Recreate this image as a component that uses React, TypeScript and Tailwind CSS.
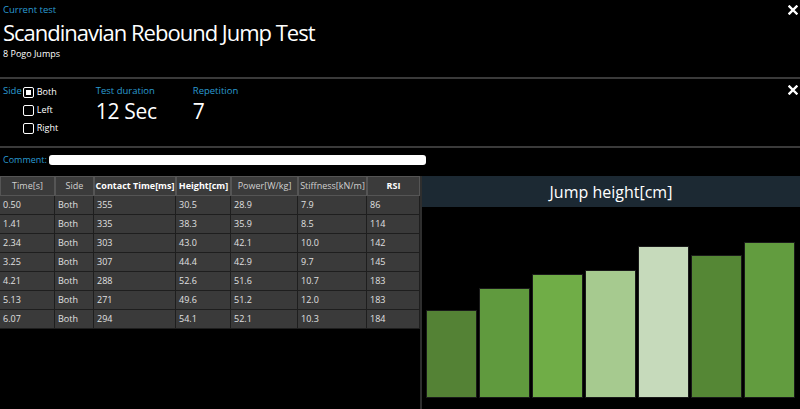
import { FC } from "react";

type Row = {
  time: string;
  side: string;
  contact: string;
  height: string;
  power: string;
  stiffness: string;
  rsi: string;
};

const rows: Row[] = [
  { time: "0.50", side: "Both", contact: "355", height: "30.5", power: "28.9", stiffness: "7.9", rsi: "86" },
  { time: "1.41", side: "Both", contact: "335", height: "38.3", power: "35.9", stiffness: "8.5", rsi: "114" },
  { time: "2.34", side: "Both", contact: "303", height: "43.0", power: "42.1", stiffness: "10.0", rsi: "142" },
  { time: "3.25", side: "Both", contact: "307", height: "44.4", power: "42.9", stiffness: "9.7", rsi: "145" },
  { time: "4.21", side: "Both", contact: "288", height: "52.6", power: "51.6", stiffness: "10.7", rsi: "183" },
  { time: "5.13", side: "Both", contact: "271", height: "49.6", power: "51.2", stiffness: "12.0", rsi: "183" },
  { time: "6.07", side: "Both", contact: "294", height: "54.1", power: "52.1", stiffness: "10.3", rsi: "184" },
];

const columns = [
  { label: "Time[s]", w: "w-[55px]", bold: false },
  { label: "Side", w: "w-[39px]", bold: false },
  { label: "Contact Time[ms]", w: "w-[82px]", bold: true },
  { label: "Height[cm]", w: "w-[55px]", bold: true },
  { label: "Power[W/kg]", w: "w-[67px]", bold: false },
  { label: "Stiffness[kN/m]", w: "w-[69px]", bold: false },
  { label: "RSI", w: "w-[53px]", bold: true },
];

const barColors = [
  "bg-[#548235]",
  "bg-[#609a3e]",
  "bg-[#70ad47]",
  "bg-[#a6ca8f]",
  "bg-[#c6dabb]",
  "bg-[#558735]",
  "bg-[#629c3f]",
];

const CloseX: FC = () => (
  <svg width="10" height="10" viewBox="0 0 10 10">
    <path d="M1.5 1.5 L8.5 8.5 M8.5 1.5 L1.5 8.5" stroke="white" strokeWidth="2.4" strokeLinecap="square" />
  </svg>
);

const Check: FC<{ label: string; checked?: boolean }> = ({ label, checked }) => (
  <div className="flex items-center h-[18px] gap-[3px]">
    <div className="w-[11px] h-[11px] border-[1.5px] border-white rounded-[2px] flex items-center justify-center">
      {checked && <div className="w-[5px] h-[5px] bg-white" />}
    </div>
    <span className="text-[9px] text-white">{label}</span>
  </div>
);

const App: FC = () => {
  const vals = rows.map((r) => ({ key: r.time, h: parseFloat(r.height) }));
  return (
    <div className="w-[800px] h-[409px] bg-black text-white overflow-hidden flex flex-col font-['Open_Sans',sans-serif]">
      {/* header */}
      <div className="relative h-[79px] shrink-0 px-[3px] pt-[4px] border-b-2 border-[#3a3a3a]">
        <div className="absolute right-[2px] top-[5px]">
          <CloseX />
        </div>
        <p className="text-[9.5px] leading-[12px] text-[#2b9bd1]">Current test</p>
        <h1 className="text-[22px] leading-[30px] tracking-[-1px] mt-[1px]">Scandinavian Rebound Jump Test</h1>
        <p className="text-[9px] leading-[13px]">8 Pogo Jumps</p>
      </div>

      {/* settings */}
      <div className="relative h-[69px] shrink-0 flex px-[3px] pt-[5px] border-b-2 border-[#3a3a3a]">
        <div className="absolute right-[2px] top-[6px]">
          <CloseX />
        </div>
        <span className="text-[9.5px] text-[#2b9bd1] leading-[14px] mr-[1px]">Side</span>
        <div className="flex flex-col -mt-[1px] w-[73px]">
          <Check label="Both" checked />
          <Check label="Left" />
          <Check label="Right" />
        </div>
        <div className="w-[97px] pt-[1px]">
          <p className="text-[9.5px] text-[#2b9bd1] leading-[12px]">Test duration</p>
          <p className="text-[21px] leading-[26px] mt-[1px] tracking-[-0.3px]">12 Sec</p>
        </div>
        <div className="pt-[1px]">
          <p className="text-[9.5px] text-[#2b9bd1] leading-[12px]">Repetition</p>
          <p className="text-[21px] leading-[26px] mt-[1px]">7</p>
        </div>
      </div>

      {/* comment */}
      <div className="h-[28px] shrink-0 flex items-start pt-[6px] px-[3px] gap-[2px]">
        <span className="text-[9px] leading-[12px] text-[#2b9bd1]">Comment:</span>
        <div className="w-[377px] h-[10px] bg-white rounded-[3px] mt-[1px]" />
      </div>

      {/* table + chart */}
      <div className="flex flex-1 min-h-0">
        <div className="w-[420px] shrink-0 text-[9px]">
          <div className="flex h-[20px] bg-[#3b3b3b]">
            {columns.map((c) => (
              <div
                key={c.label}
                className={`${c.w} shrink-0 flex items-center justify-center border border-[#555] ${
                  c.bold ? "font-bold text-white" : "text-[#d0d0d0]"
                }`}
              >
                {c.label}
              </div>
            ))}
          </div>
          {rows.map((r) => {
            const cells = [r.time, r.side, r.contact, r.height, r.power, r.stiffness, r.rsi];
            return (
              <div key={r.time} className="flex h-[19px] bg-[#3a3a3a]">
                {cells.map((v, i) => (
                  <div
                    key={i}
                    className={`${columns[i].w} shrink-0 flex items-center pl-[3px] text-[#e0e0e0] border-b border-r border-[#1e1e1e]`}
                  >
                    {v}
                  </div>
                ))}
              </div>
            );
          })}
        </div>
        <div className="w-[2px] shrink-0 bg-[#2e2e2e]" />
        <div className="flex-1 flex flex-col">
          <div className="h-[31px] shrink-0 bg-[#1c2933] flex items-center justify-center text-[16px]">
            Jump height[cm]
          </div>
          <div className="flex-1 flex items-end gap-[2px] pl-[4px] pr-[4px] pb-[11px]">
            {vals.map((v, i) => (
              <div
                key={v.key}
                className={`w-[51px] ${barColors[i]} border border-[#1a1a1a]`}
                style={{ height: `${Math.round(v.h * 2.885)}px` }}
              />
            ))}
          </div>
        </div>
      </div>
    </div>
  );
};

export default App;
